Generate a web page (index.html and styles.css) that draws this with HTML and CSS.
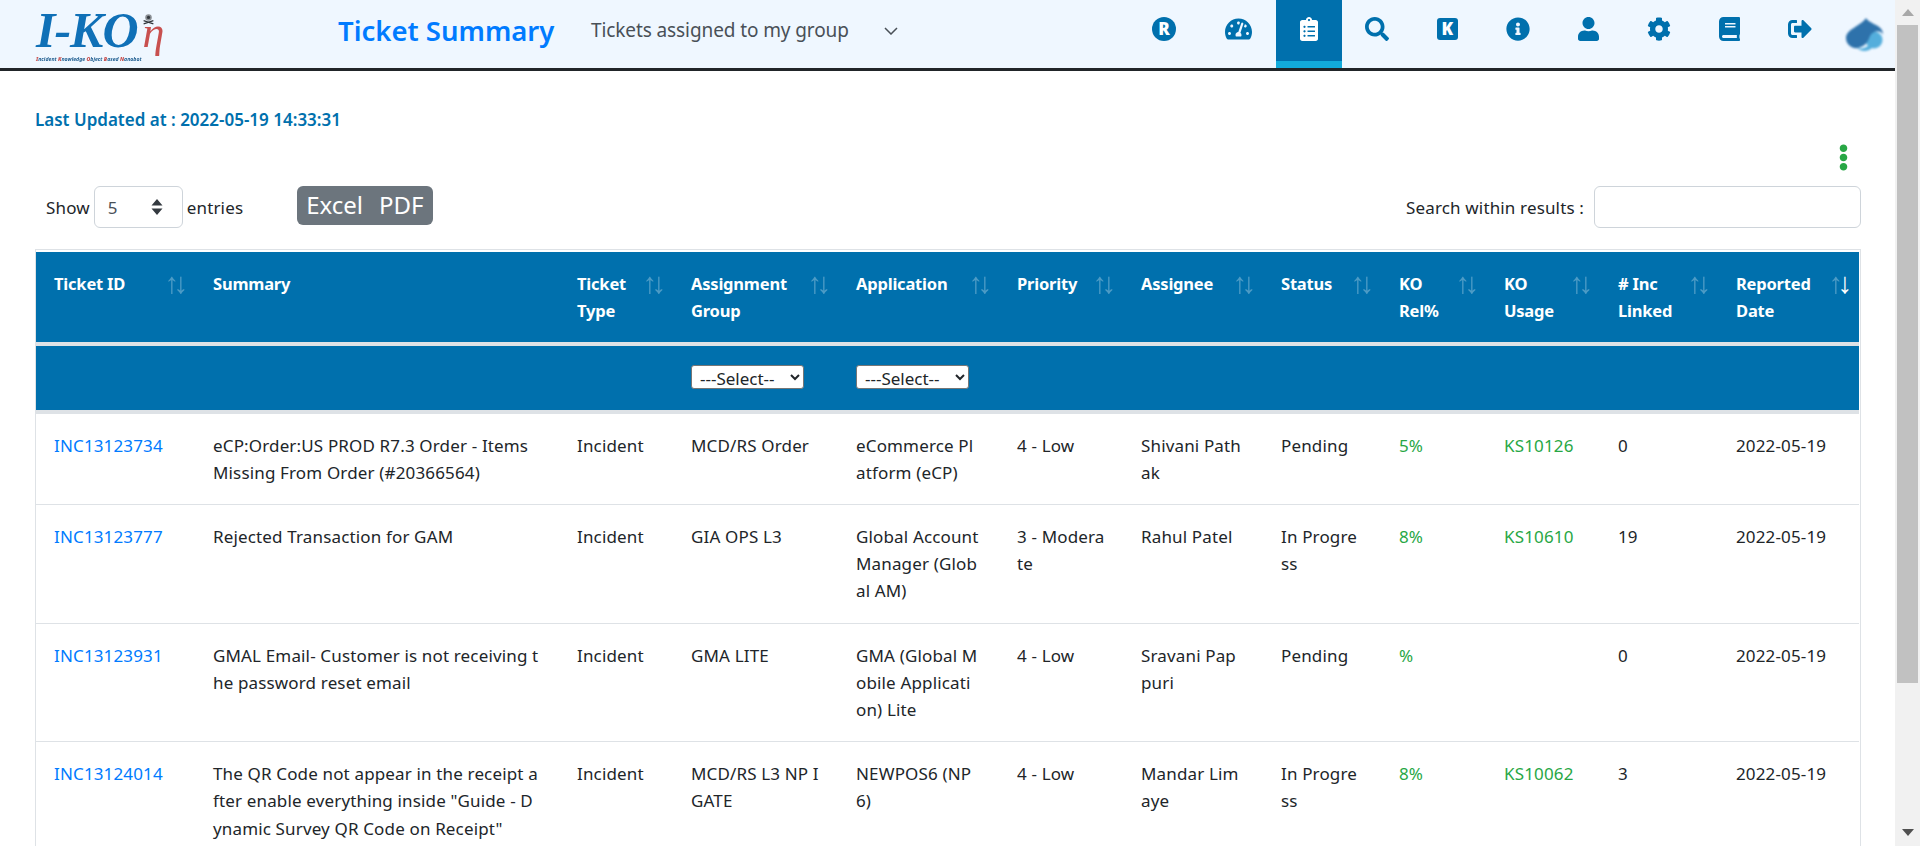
FILE: index.html
```html
<!DOCTYPE html>
<html lang="en">
<head>
    <meta charset="UTF-8">
    <meta name="viewport" content="width=device-width, initial-scale=1.0">
    <title>Ticket Summary</title>
    <link rel="stylesheet" href="styles.css">
</head>
<body>
    <div id="app">
        <div id="page">
            <div id="navbar">
                <div class="logo">
                    <div class="logo-main">I-KO<span class="logo-eta">η</span></div>
                    <svg class="logo-bug" viewBox="0 0 16 14"><circle cx="8" cy="5" r="4" fill="#8a8f94"/><circle cx="8" cy="5" r="2" fill="#33383d"/><path d="M2 9l12 4M14 9L2 13" stroke="#33383d" stroke-width="1.6"/></svg>
                    <div class="logo-sub"><b>I</b>ncident <b>K</b>nowledge <b>O</b>bject <b>B</b>ased <b>N</b>anobot</div>
                </div>
                <div class="page-title">Ticket Summary</div>
                <div class="view-select">
                    <span>Tickets assigned to my group</span>
                    <svg width="14" height="8" viewBox="0 0 14 8"><path d="M1 1l6 6 6-6" fill="none" stroke="#495057" stroke-width="1.5"/></svg>
                </div>
                <div class="nav-icons">
                    <a class="nav-item nav-first"><span class="icon-r">R</span></a>
                    <a class="nav-item"><svg class="ic ic-gauge" viewBox="0 0 576 512"><path d="M288 32C128.94 32 0 160.94 0 320c0 52.8 14.25 102.26 39.06 144.8 5.61 9.62 16.3 15.2 27.44 15.2h443c11.14 0 21.83-5.58 27.44-15.2C561.75 422.26 576 372.8 576 320c0-159.06-128.94-288-288-288zm0 64c14.71 0 26.58 10.13 30.32 23.65-1.11 2.26-2.64 4.23-3.45 6.67l-9.22 27.67c-5.13 3.49-10.97 6.01-17.64 6.01-17.67 0-32-14.33-32-32S270.33 96 288 96zM96 384c-17.67 0-32-14.33-32-32s14.33-32 32-32 32 14.33 32 32-14.33 32-32 32zm48-160c-17.67 0-32-14.33-32-32s14.33-32 32-32 32 14.33 32 32-14.33 32-32 32zm246.77-72.41l-61.33 184C343.13 347.33 352 364.54 352 384c0 11.72-3.38 22.55-8.88 32H232.88c-5.5-9.45-8.88-20.28-8.88-32 0-33.94 26.5-61.43 59.9-63.59l61.34-184.01c4.17-12.56 17.73-19.45 30.36-15.17 12.57 4.19 19.35 17.79 15.17 30.36zm14.66 57.2l15.52-46.55c3.47-1.29 7.13-2.23 11.05-2.23 17.67 0 32 14.33 32 32s-14.33 32-32 32c-11.38-.01-20.89-6.28-26.57-15.22zM480 384c-17.67 0-32-14.33-32-32s14.33-32 32-32 32 14.33 32 32-14.33 32-32 32z"/></svg></a>
                    <a class="nav-item active"><svg class="ic ic-clip" viewBox="0 0 384 512"><path d="M336 64h-80c0-35.3-28.7-64-64-64s-64 28.7-64 64H48C21.5 64 0 85.5 0 112v352c0 26.5 21.5 48 48 48h288c26.5 0 48-21.5 48-48V112c0-26.5-21.5-48-48-48zM96 424c-13.3 0-24-10.7-24-24s10.7-24 24-24 24 10.7 24 24-10.7 24-24 24zm0-96c-13.3 0-24-10.7-24-24s10.7-24 24-24 24 10.7 24 24-10.7 24-24 24zm0-96c-13.3 0-24-10.7-24-24s10.7-24 24-24 24 10.7 24 24-10.7 24-24 24zm96-192c13.3 0 24 10.7 24 24s-10.7 24-24 24-24-10.7-24-24 10.7-24 24-24zm128 368c0 4.4-3.6 8-8 8H168c-4.4 0-8-3.6-8-8v-16c0-4.4 3.6-8 8-8h144c4.4 0 8 3.6 8 8v16zm0-96c0 4.4-3.6 8-8 8H168c-4.4 0-8-3.6-8-8v-16c0-4.4 3.6-8 8-8h144c4.4 0 8 3.6 8 8v16zm0-96c0 4.4-3.6 8-8 8H168c-4.4 0-8-3.6-8-8v-16c0-4.4 3.6-8 8-8h144c4.4 0 8 3.6 8 8v16z"/></svg></a>
                    <a class="nav-item nav-search"><svg class="ic" viewBox="0 0 512 512"><path d="M505 442.7L405.3 343c-4.5-4.5-10.6-7-17-7H372c27.6-35.3 44-79.7 44-128C416 93.1 322.9 0 208 0S0 93.1 0 208s93.1 208 208 208c48.3 0 92.7-16.4 128-44v16.3c0 6.4 2.5 12.5 7 17l99.7 99.7c9.4 9.4 24.6 9.4 33.9 0l28.3-28.3c9.4-9.4 9.4-24.6.1-34zM208 336c-70.7 0-128-57.2-128-128 0-70.7 57.2-128 128-128 70.7 0 128 57.2 128 128 0 70.7-57.2 128-128 128z"/></svg></a>
                    <a class="nav-item"><span class="icon-k">K</span></a>
                    <a class="nav-item"><svg class="ic" viewBox="0 0 512 512"><path d="M256 8C119.043 8 8 119.083 8 256c0 136.997 111.043 248 248 248s248-111.003 248-248C504 119.083 392.957 8 256 8zm0 110c23.196 0 42 18.804 42 42s-18.804 42-42 42-42-18.804-42-42 18.804-42 42-42zm56 254c0 6.627-5.373 12-12 12h-88c-6.627 0-12-5.373-12-12v-24c0-6.627 5.373-12 12-12h12v-64h-12c-6.627 0-12-5.373-12-12v-24c0-6.627 5.373-12 12-12h64c6.627 0 12 5.373 12 12v100h12c6.627 0 12 5.373 12 12v24z"/></svg></a>
                    <a class="nav-item"><svg class="ic ic-narrow" viewBox="0 0 448 512"><path d="M224 256c70.7 0 128-57.3 128-128S294.7 0 224 0 96 57.3 96 128s57.3 128 128 128zm89.6 32h-16.7c-22.2 10.2-46.9 16-72.9 16s-50.6-5.8-72.9-16h-16.7C60.2 288 0 348.2 0 422.4V464c0 26.5 21.5 48 48 48h352c26.5 0 48-21.5 48-48v-41.6c0-74.2-60.2-134.4-134.4-134.4z"/></svg></a>
                    <a class="nav-item"><svg class="ic" viewBox="0 0 512 512"><path d="M487.4 315.7l-42.6-24.6c4.3-23.2 4.3-47 0-70.2l42.6-24.6c4.9-2.8 7.1-8.6 5.5-14-11.1-35.6-30-67.8-54.7-94.6-3.8-4.1-10-5.1-14.8-2.3L380.8 110c-17.9-15.4-38.5-27.3-60.8-35.1V25.8c0-5.6-3.9-10.5-9.4-11.7-36.7-8.2-74.3-7.8-109.2 0-5.5 1.2-9.4 6.1-9.4 11.7V75c-22.2 7.9-42.8 19.8-60.8 35.1L88.7 85.5c-4.9-2.8-11-1.9-14.8 2.3-24.7 26.7-43.6 58.9-54.7 94.6-1.7 5.4.6 11.2 5.5 14L67.3 221c-4.3 23.2-4.3 47 0 70.2l-42.6 24.6c-4.9 2.8-7.1 8.6-5.5 14 11.1 35.6 30 67.8 54.7 94.6 3.8 4.1 10 5.1 14.8 2.3l42.6-24.6c17.9 15.4 38.5 27.3 60.8 35.1v49.2c0 5.6 3.9 10.5 9.4 11.7 36.7 8.2 74.3 7.8 109.2 0 5.5-1.2 9.4-6.1 9.4-11.7v-49.2c22.2-7.9 42.8-19.8 60.8-35.1l42.6 24.6c4.9 2.8 11 1.9 14.8-2.3 24.7-26.7 43.6-58.9 54.7-94.6 1.5-5.5-.7-11.3-5.6-14.1zM256 336c-44.1 0-80-35.9-80-80s35.9-80 80-80 80 35.9 80 80-35.9 80-80 80z"/></svg></a>
                    <a class="nav-item"><svg class="ic ic-narrow" viewBox="0 0 448 512"><path d="M448 360V24c0-13.3-10.7-24-24-24H96C43 0 0 43 0 96v320c0 53 43 96 96 96h328c13.3 0 24-10.7 24-24v-16c0-7.5-3.5-14.3-8.9-18.7-4.2-15.4-4.2-59.3 0-74.7 5.4-4.3 8.9-11.1 8.9-18.6zM128 134c0-3.3 2.7-6 6-6h212c3.3 0 6 2.7 6 6v20c0 3.3-2.7 6-6 6H134c-3.3 0-6-2.7-6-6v-20zm0 64c0-3.3 2.7-6 6-6h212c3.3 0 6 2.7 6 6v20c0 3.3-2.7 6-6 6H134c-3.3 0-6-2.7-6-6v-20zm253.4 250H96c-17.7 0-32-14.3-32-32 0-17.6 14.4-32 32-32h285.4c-1.9 17.1-1.9 46.9 0 64z"/></svg></a>
                    <a class="nav-item"><svg class="ic" viewBox="0 0 512 512"><path d="M497 273L329 441c-15 15-41 4.5-41-17v-96H152c-13.3 0-24-10.7-24-24v-96c0-13.3 10.7-24 24-24h136V88c0-21.4 25.9-32 41-17l168 168c9.3 9.4 9.3 24.6 0 34zM192 436v-40c0-6.6-5.4-12-12-12H96c-17.7 0-32-14.3-32-32V160c0-17.7 14.3-32 32-32h84c6.6 0 12-5.4 12-12V76c0-6.6-5.4-12-12-12H96c-53 0-96 43-96 96v192c0 53 43 96 96 96h84c6.6 0 12-5.4 12-12z"/></svg></a>
                    <svg class="avatar" viewBox="0 0 38 34"><circle cx="28" cy="22" r="8.500" fill="#54aedc"/><path d="M20 0C23 6 38 7 37 17 36 12 27 12 24 18 22 23 20 28 12 30 5 31 0 26 0 20 0 11 15 8 20 0z" fill="#2e72ab"/><path d="M11 30c5 1 9 0 12-3l3 3c-4 4-11 4-15 0z" fill="#54aedc"/></svg>
                </div>
            </div>

            <div id="content">
                <div class="last-updated">Last Updated at : 2022-05-19 14:33:31</div>
                <div class="more-row">
                    <svg class="more-dots" viewBox="0 0 192 512"><path d="M96 184c39.8 0 72 32.2 72 72s-32.2 72-72 72-72-32.2-72-72 32.2-72 72-72zM24 80c0 39.8 32.2 72 72 72s72-32.2 72-72S135.8 8 96 8 24 40.2 24 80zm0 352c0 39.8 32.2 72 72 72s72-32.2 72-72-32.2-72-72-72-72 32.2-72 72z"/></svg>
                </div>
                <div class="toolbar">
                    <div class="entries">
                        <span>Show</span>
                        <div class="len-select">
                            <span>5</span>
                            <svg width="12" height="16" viewBox="0 0 12 16"><path d="M6 0l5.500 6.500H.5zM6 16L.5 9.500h11z" fill="#343a40"/></svg>
                        </div>
                        <span>entries</span>
                    </div>
                    <div class="export-btn"><span>Excel</span><span>PDF</span></div>
                    <div class="search-box">
                        <label>Search within results :</label>
                        <input type="text">
                    </div>
                </div>

                <div class="table-wrap">
                    <table id="tickets">
                        <colgroup>
                            <col class="c-id"><col class="c-summary"><col class="c-type"><col class="c-group"><col class="c-app"><col class="c-prio">
                            <col class="c-assignee"><col class="c-status"><col class="c-rel"><col class="c-usage"><col class="c-inc"><col class="c-date">
                        </colgroup>
                        <thead>
                            <tr class="head-row">
                                <th class="sort">Ticket ID</th>
                                <th>Summary</th>
                                <th class="sort">Ticket<br>Type</th>
                                <th class="sort">Assignment<br>Group</th>
                                <th class="sort">Application</th>
                                <th class="sort">Priority</th>
                                <th class="sort">Assignee</th>
                                <th class="sort">Status</th>
                                <th class="sort">KO<br>Rel%</th>
                                <th class="sort">KO<br>Usage</th>
                                <th class="sort"># Inc<br>Linked</th>
                                <th class="sort sort-desc">Reported<br>Date</th>
                            </tr>
                            <tr class="filter-row">
                                <th></th><th></th><th></th>
                                <th><select><option>---Select--</option></select></th>
                                <th><select><option>---Select--</option></select></th>
                                <th></th><th></th><th></th><th></th><th></th><th></th><th></th>
                            </tr>
                        </thead>
                        <tbody>
                            <tr>
                                <td><a class="ticket-link">INC13123734</a></td>
                                <td>eCP:Order:US PROD R7.3 Order - Items<br>Missing From Order (#20366564)</td>
                                <td>Incident</td>
                                <td>MCD/RS Order</td>
                                <td>eCommerce Pl<br>atform (eCP)</td>
                                <td>4 - Low</td>
                                <td>Shivani Path<br>ak</td>
                                <td>Pending</td>
                                <td class="green">5%</td>
                                <td class="green">KS10126</td>
                                <td>0</td>
                                <td>2022-05-19</td>
                            </tr>
                            <tr>
                                <td><a class="ticket-link">INC13123777</a></td>
                                <td>Rejected Transaction for GAM</td>
                                <td>Incident</td>
                                <td>GIA OPS L3</td>
                                <td>Global Account<br>Manager (Glob<br>al AM)</td>
                                <td>3 - Modera<br>te</td>
                                <td>Rahul Patel</td>
                                <td>In Progre<br>ss</td>
                                <td class="green">8%</td>
                                <td class="green">KS10610</td>
                                <td>19</td>
                                <td>2022-05-19</td>
                            </tr>
                            <tr>
                                <td><a class="ticket-link">INC13123931</a></td>
                                <td>GMAL Email- Customer is not receiving t<br>he password reset email</td>
                                <td>Incident</td>
                                <td>GMA LITE</td>
                                <td>GMA (Global M<br>obile Applicati<br>on) Lite</td>
                                <td>4 - Low</td>
                                <td>Sravani Pap<br>puri</td>
                                <td>Pending</td>
                                <td class="green">%</td>
                                <td class="green"></td>
                                <td>0</td>
                                <td>2022-05-19</td>
                            </tr>
                            <tr>
                                <td><a class="ticket-link">INC13124014</a></td>
                                <td>The QR Code not appear in the receipt a<br>fter enable everything inside "Guide - D<br>ynamic Survey QR Code on Receipt"</td>
                                <td>Incident</td>
                                <td>MCD/RS L3 NP I<br>GATE</td>
                                <td>NEWPOS6 (NP<br>6)</td>
                                <td>4 - Low</td>
                                <td>Mandar Lim<br>aye</td>
                                <td>In Progre<br>ss</td>
                                <td class="green">8%</td>
                                <td class="green">KS10062</td>
                                <td>3</td>
                                <td>2022-05-19</td>
                            </tr>
                        </tbody>
                    </table>
                </div>
            </div>
        </div>

        <div id="scrollbar">
            <div class="sb-btn"><span class="sb-up"></span></div>
            <div class="sb-thumb"></div>
            <div class="sb-rest"><span class="sb-down"></span></div>
        </div>
    </div>
</body>
</html>
```

FILE: styles.css
```css
html, body {
    margin: 0;
    padding: 0;
    height: 100%;
    overflow: hidden;
}
body {
    font-family: "Noto Sans", sans-serif;
    font-size: 17px;
    line-height: 27.2px;
    letter-spacing: 0.15px;
    color: #212529;
    background-color: #fff;
}
#app {
    display: flex;
    height: 846px;
}
#page {
    flex: 1;
    min-width: 0;
    overflow: hidden;
}

/* navbar */
#navbar {
    display: flex;
    align-items: flex-start;
    height: 68px;
    background-color: #eff7ff;
    border-bottom: 3px solid #212529;
}
.logo {
    position: relative;
    width: 302px;
    height: 68px;
    margin-left: 36px;
    filter: blur(0.5px);
}
.logo-main {
    padding-top: 7px;
    font-family: "Liberation Serif", serif;
    font-size: 50px;
    line-height: 46px;
    font-weight: bold;
    font-style: italic;
    color: #0f70b7;
    letter-spacing: -1px;
}
.logo-eta {
    font-size: 44px;
    font-weight: normal;
    color: #c8504f;
    margin-left: 5px;
}
.logo-bug {
    position: absolute;
    left: 106px;
    top: 13px;
    width: 13px;
    height: 12px;
}
.logo-sub {
    font-size: 5.2px;
    line-height: 6px;
    letter-spacing: 0;
    font-weight: bold;
    font-style: italic;
    color: #1d5c8f;
    white-space: nowrap;
}
.logo-sub b {
    color: #c8504f;
}
.page-title {
    width: 253px;
    font-size: 27.5px;
    line-height: 62px;
    letter-spacing: 0;
    font-weight: 600;
    color: #007bff;
    white-space: nowrap;
}
.view-select {
    display: flex;
    align-items: center;
    gap: 35px;
    height: 62px;
    font-size: 19px;
    letter-spacing: -0.1px;
    color: #495057;
    white-space: nowrap;
}
.nav-icons {
    display: flex;
    align-items: flex-start;
    gap: 4.6px;
    margin-left: auto;
}
.nav-item {
    display: flex;
    justify-content: center;
    box-sizing: border-box;
    width: 66px;
    height: 68px;
    padding-top: 17px;
}
.nav-first {
    margin-right: 3.5px;
}
.nav-search {
    margin-left: -2.5px;
}
.nav-item.active {
    background-color: #0070ad;
    border-bottom: 7px solid #12abdb;
}
.ic {
    width: 24px;
    height: 24px;
    fill: #0070ad;
}
.ic-narrow {
    width: 21px;
}
.ic-gauge {
    width: 27px;
}
.ic-clip {
    width: 18px;
    fill: #fff;
}
.icon-r {
    display: block;
    width: 24px;
    height: 24px;
    border-radius: 50%;
    background-color: #0070ad;
    color: #fff;
    font-size: 17px;
    line-height: 24px;
    letter-spacing: 0;
    font-weight: 900;
    text-align: center;
}
.icon-k {
    display: block;
    width: 21px;
    height: 22px;
    margin-top: 1px;
    border-radius: 3px;
    background-color: #0070ad;
    color: #fff;
    font-size: 17px;
    line-height: 22px;
    letter-spacing: 0;
    font-weight: 900;
    text-align: center;
}
.avatar {
    width: 38px;
    height: 34px;
    margin: 18px 11px 0 8px;
    filter: blur(1px);
}

/* top of content */
.last-updated {
    margin: 35px 0 0 35px;
    font-weight: 600;
    letter-spacing: 0;
    color: #0070ad;
}
.more-row {
    display: flex;
    justify-content: flex-end;
    height: 27px;
    margin-top: 11px;
    padding-right: 46px;
}
.more-dots {
    width: 11px;
    height: 27px;
    fill: #28a745;
}
.toolbar {
    display: flex;
    align-items: flex-start;
    height: 42px;
    margin: 15px 34px 21px 46px;
}
.entries {
    display: flex;
    align-items: center;
    gap: 4px;
    height: 42px;
}
.len-select {
    display: flex;
    align-items: center;
    justify-content: space-between;
    box-sizing: border-box;
    width: 89px;
    height: 42px;
    padding: 0 19px 0 13px;
    border: 1px solid #ced4da;
    border-radius: 6px;
    color: #495057;
}
.export-btn {
    display: flex;
    gap: 16px;
    height: 39px;
    margin-left: 54px;
    padding: 0 10px 0 9px;
    border-radius: 6px;
    background-color: #6c757d;
    color: #fff;
    font-size: 24px;
    line-height: 38px;
    letter-spacing: 0;
}
.search-box {
    display: flex;
    align-items: center;
    gap: 10px;
    height: 42px;
    margin-left: auto;
}
.search-box input {
    box-sizing: border-box;
    width: 267px;
    height: 42px;
    border: 1px solid #ced4da;
    border-radius: 6px;
}

/* table */
.table-wrap {
    box-sizing: border-box;
    width: 1826px;
    margin-left: 35px;
    padding: 2px 1px 0 0;
    border: 1px solid #dee2e6;
}
#tickets {
    width: 1823px;
    table-layout: fixed;
    border-collapse: collapse;
}
.c-id { width: 159px; }
.c-summary { width: 364px; }
.c-type { width: 114px; }
.c-group { width: 165px; }
.c-app { width: 161px; }
.c-prio { width: 124px; }
.c-assignee { width: 140px; }
.c-status { width: 118px; }
.c-rel { width: 105px; }
.c-usage { width: 114px; }
.c-inc { width: 118px; }
.c-date { width: 141px; }
#tickets th {
    position: relative;
    padding: 18px 18px 17px;
    background-color: #0070ad;
    color: #fff;
    font-size: 16.5px;
    letter-spacing: -0.2px;
    font-weight: bold;
    text-align: left;
    vertical-align: top;
    white-space: nowrap;
}
.head-row th {
    border-bottom: 4px solid #dee2e6;
}
#tickets .filter-row th {
    height: 68px;
    box-sizing: border-box;
    padding: 19px 18px 0;
    border-bottom: 4px solid #dee2e6;
}
.filter-row select {
    display: block;
    width: 113px;
    height: 24px;
    padding: 0 0 0 4px;
    background-color: #fff;
    border: 1px solid #767676;
    border-radius: 3px;
    font-family: "Noto Sans", sans-serif;
    font-size: 17px;
    color: #212529;
}
th.sort::before,
th.sort::after {
    position: absolute;
    top: 18px;
    opacity: 0.3;
    font-family: "Liberation Sans", sans-serif;
    font-size: 29px;
    font-weight: normal;
    letter-spacing: 0;
    line-height: 27.2px;
}
th.sort::before {
    content: "\2191";
    right: 16px;
}
th.sort::after {
    content: "\2193";
    right: 7px;
}
th.sort-desc::after {
    opacity: 1;
}
#tickets td {
    padding: 18px;
    vertical-align: top;
    white-space: nowrap;
    overflow: hidden;
    border-bottom: 1px solid #dee2e6;
}
.ticket-link {
    color: #007bff;
}
.green {
    color: #28a745;
}

/* scrollbar column */
#scrollbar {
    display: flex;
    flex-direction: column;
    width: 25px;
    background-color: #f1f1f1;
}
.sb-btn {
    display: flex;
    align-items: center;
    justify-content: center;
    height: 25px;
}
.sb-thumb {
    height: 658px;
    margin: 0 2px;
    background-color: #c1c1c1;
}
.sb-rest {
    flex: 1;
    display: flex;
    align-items: flex-end;
    justify-content: center;
    padding-bottom: 10px;
}
.sb-up {
    border-left: 6px solid transparent;
    border-right: 6px solid transparent;
    border-bottom: 7px solid #a8a8a8;
}
.sb-down {
    border-left: 6px solid transparent;
    border-right: 6px solid transparent;
    border-top: 7px solid #505050;
}
```
